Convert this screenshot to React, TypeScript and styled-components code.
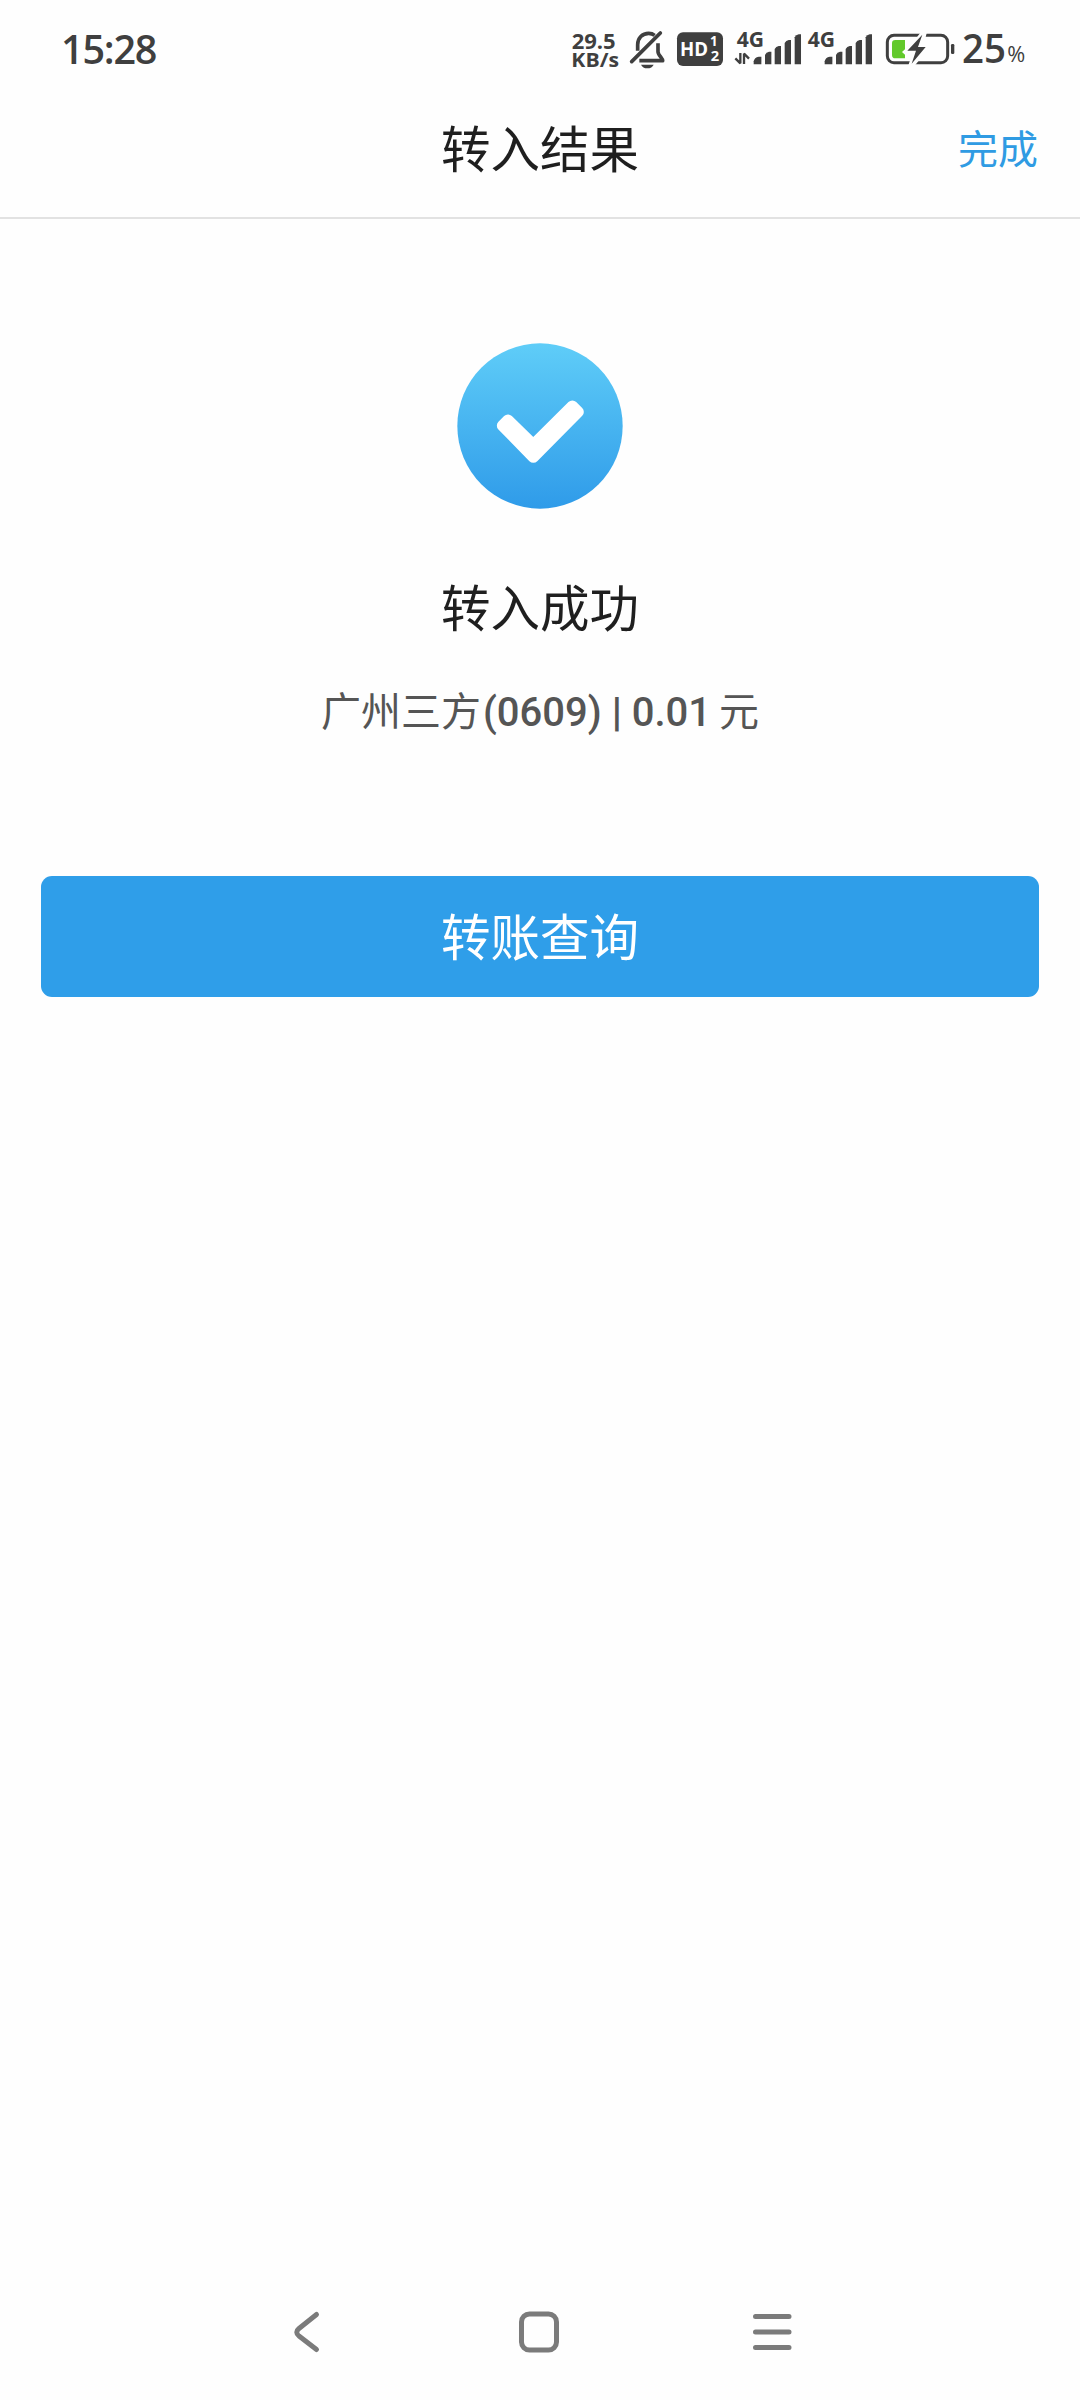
import React from 'react';
import styled, { createGlobalStyle } from 'styled-components';

const INK = '#3f3f3f';
const CJK = '"Noto Sans CJK SC", sans-serif';

const GlobalStyle = createGlobalStyle`
  * { box-sizing: border-box; }
  body { margin: 0; background: #fefefe; }
`;

const Screen = styled.div`
  display: flex;
  flex-direction: column;
  width: 1080px;
  height: 2400px;
  background: #fefefe;
  font-family: Roboto, ${CJK};
  overflow: hidden;
`;

const StatusBar = styled.div`
  display: flex;
  justify-content: space-between;
  height: 98px;
  padding: 20px 53px 0 61px;
  color: ${INK};
  font-family: "Open Sans", "Noto Sans", sans-serif;
`;

const Clock = styled.div`
  height: 60px;
  line-height: 58px;
  font-size: 39.5px;
  font-weight: 600;
  letter-spacing: -1.2px;
`;

const StatusIcons = styled.div`
  display: flex;
  height: 60px;
`;

const Glyph = styled.svg<{ $gap?: number }>`
  display: block;
  flex: none;
  margin-left: ${({ $gap = 0 }) => $gap}px;
  font-family: "Open Sans", "Noto Sans", sans-serif;
  font-weight: 700;
`;

const Header = styled.header`
  display: grid;
  grid-template-columns: 1fr auto 1fr;
  align-items: center;
  height: 121px;
  padding: 0 41px 21px;
  border-bottom: 2px solid #e2e2e2;
`;

const Title = styled.h1`
  grid-column: 2;
  margin: 0;
  font: 400 49.5px/70px ${CJK};
  color: #1f1f1f;
`;

const DoneButton = styled.button`
  justify-self: end;
  padding: 0 1px 0 0;
  border: 0;
  background: none;
  font: 400 40px/60px ${CJK};
  color: #2f9be3;
`;

const Result = styled.main`
  display: flex;
  flex: 1;
  flex-direction: column;
  align-items: center;
  padding: 124px 41px 0;
`;

const ResultTitle = styled.h2`
  margin: 62px 0 0;
  font: 400 49.5px/70px ${CJK};
  color: #1f1f1f;
`;

const Detail = styled.p`
  margin: 38px 0 0;
  height: 60px;
  font: 400 40px/60px ${CJK};
  color: #555;
  white-space: pre;
`;

const Latin = styled.span`
  margin: 0 -2px 0 2px;
  font-family: Roboto, sans-serif;
  font-weight: 500;
`;

const Bar = styled.span`
  font-family: Roboto, sans-serif;
  font-weight: 800;
`;

const QueryButton = styled.button`
  width: 998px;
  height: 121px;
  margin-top: 137px;
  padding: 0 0 3px;
  border: 0;
  border-radius: 11px;
  background: #2f9ee9;
  font: 400 49.5px/70px ${CJK};
  color: #fff;
`;

const NavBar = styled.nav`
  display: flex;
  align-items: center;
  height: 136px;
  padding-left: 286px;
`;

const bars = [
  [100, 123, 110],
  [134, 153, 95],
  [163, 182, 78],
  [193, 212, 60],
  [223, 242, 43],
];

function Signal({ data }: { data?: boolean }) {
  return (
    <Glyph width="70.7" height="60" viewBox="38 0 212 180" fill={INK}>
      <text x="49" y="81" fontSize="64" textLength="82" lengthAdjust="spacingAndGlyphs">4G</text>
      {data && (
        <path d="M60 99V130L45 115M71 132V101L86 116" fill="none" stroke={INK} strokeWidth="7" strokeLinejoin="bevel" />
      )}
      {bars.map(([l, r, t], i) => (
        <path key={l} d={i === 0
          ? `M${l} 133v-9q2-12 15-14h8v23z`
          : `M${l} 133V${t + 9}q4-7 12-9h${r - l - 12}V133z`} />
      ))}
    </Glyph>
  );
}

export default function App() {
  return (
    <>
      <GlobalStyle />
      <Screen>
        <StatusBar>
          <Clock>15:28</Clock>
          <StatusIcons>
            <Glyph width="58" height="60" viewBox="30 0 174 180" fill={INK}>
              <text x="35" y="87" fontSize="64" textLength="132" lengthAdjust="spacingAndGlyphs">29.5</text>
              <text x="34" y="141" fontSize="58" textLength="143" lengthAdjust="spacingAndGlyphs">KB/s</text>
            </Glyph>
            <Glyph width="46" height="60" viewBox="204 0 138 180" fill="none" stroke={INK} strokeWidth="11">
              <path d="M233 92V74c0-20 14-34 33-34 7 0 13 2 18 6" />
              <path d="M215 125 301 39" strokeLinecap="round" />
              <path d="M294 70v25c0 10 14 20 14 27H238" strokeLinejoin="round" />
              <path d="M243 134h38q-5 11-19 11t-19-11z" fill={INK} stroke="none" />
            </Glyph>
            <Glyph width="58.67" height="60" viewBox="342 0 176 180">
              <rect x="351" y="37" width="138" height="101" rx="18" fill={INK} />
              <g fill="#fff">
                <text x="360" y="108" fontSize="57" textLength="84" lengthAdjust="spacingAndGlyphs">HD</text>
                <text x="450" y="79" fontSize="40">1</text>
                <text x="452" y="124" fontSize="44">2</text>
              </g>
            </Glyph>
            <Signal data />
            <Signal />
            <Glyph $gap={8} width="78.67" height="60" viewBox="36 0 236 180">
              <rect x="52" y="46" width="181" height="82" rx="20" fill="none" stroke={INK} strokeWidth="9" />
              <rect x="243" y="72" width="10" height="30" rx="4" fill={INK} />
              <path d="M76 60h29v28l-9 8 9 8v11H76q-10 0-10-10V70q0-10 10-10z" fill="#62c92b" />
              <path d="M153 36h18l-10 38h25l-51 62h-20l12-35h-25z" fill="#fefefe" />
              <path d="M157 44 112 92h26l-13 39 42-50h-23z" fill={INK} />
            </Glyph>
            <Glyph width="66" height="60" viewBox="272 0 198 180" fill={INK}>
              <text x="275" y="130" fontSize="118" fontWeight="600" textLength="132" lengthAdjust="spacingAndGlyphs">25</text>
              <text x="411" y="126" fontSize="65" fontWeight="500" textLength="54" lengthAdjust="spacingAndGlyphs">%</text>
            </Glyph>
          </StatusIcons>
        </StatusBar>

        <Header>
          <Title>转入结果</Title>
          <DoneButton>完成</DoneButton>
        </Header>

        <Result>
          <Glyph width="166" height="166" viewBox="52 38 498 498">
            <defs>
              <linearGradient id="disc" x1="0" y1="0" x2="0" y2="1">
                <stop offset="0" stopColor="#5fcdf8" />
                <stop offset="1" stopColor="#2f9be9" />
              </linearGradient>
            </defs>
            <circle cx="301" cy="287" r="248" fill="url(#disc)" />
            <path d="M188 286 205 269 281 343 398 227 416 245 281 381z" fill="#fff" stroke="#fff" strokeWidth="33" strokeLinejoin="round" />
          </Glyph>
          <ResultTitle>转入成功</ResultTitle>
          <Detail>
            广州三方<Latin>(0609) <Bar>|</Bar> 0.01 </Latin>元
          </Detail>
          <QueryButton>转账查询</QueryButton>
        </Result>

        <NavBar>
          <Glyph width="40" height="48" viewBox="0 0 40 48" fill="none" stroke="#7b7b7b" strokeWidth="5" strokeLinecap="round" strokeLinejoin="round">
            <path d="M30.5 6.500 13 20.500Q8.500 24 13 28L30.500 41.500" />
          </Glyph>
          <Glyph $gap={189} width="48" height="48" viewBox="0 0 48 48" fill="none" stroke="#7b7b7b" strokeWidth="5">
            <rect x="6.500" y="6" width="35" height="36" rx="8" />
          </Glyph>
          <Glyph $gap={184} width="46" height="48" viewBox="0 0 46 48" stroke="#7b7b7b" strokeWidth="5" strokeLinecap="round">
            <path d="M8.500 8.500h33.500M8.500 24h33.500M8.500 39.500h33.500" />
          </Glyph>
        </NavBar>
      </Screen>
    </>
  );
}
